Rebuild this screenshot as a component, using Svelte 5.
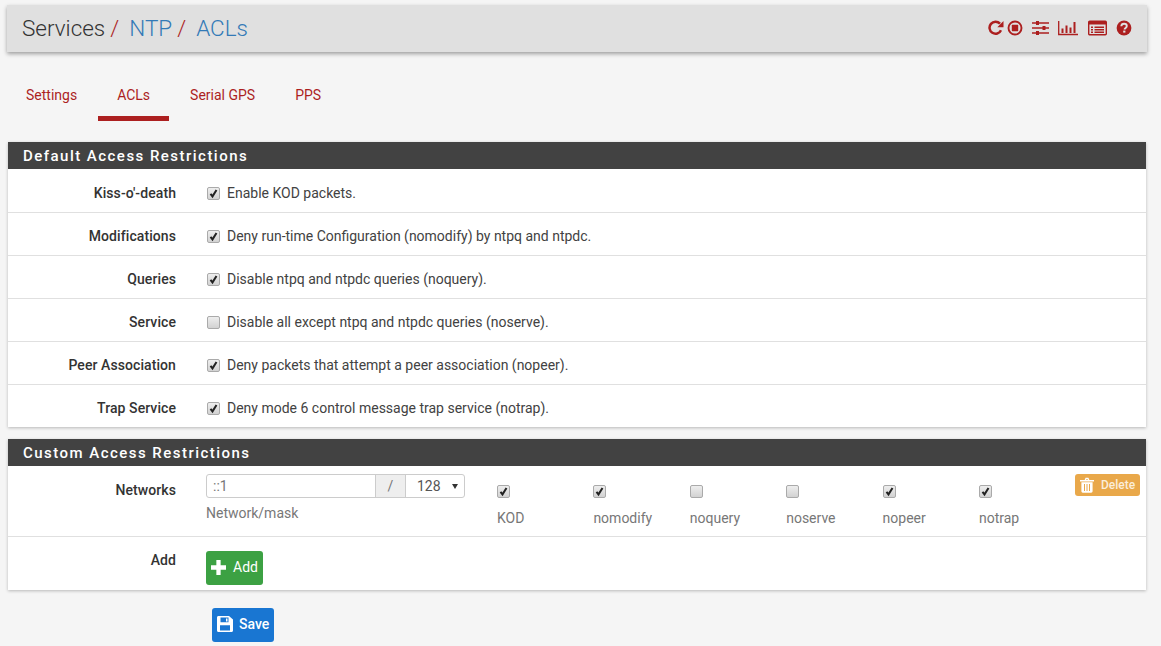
<script>
  const tabs = ["Settings", "ACLs", "Serial GPS", "PPS"];
  const restrictions = [
    { label: "Kiss-o'-death", text: "Enable KOD packets.", on: true },
    { label: "Modifications", text: "Deny run-time Configuration (nomodify) by ntpq and ntpdc.", on: true },
    { label: "Queries", text: "Disable ntpq and ntpdc queries (noquery).", on: true },
    { label: "Service", text: "Disable all except ntpq and ntpdc queries (noserve).", on: false },
    { label: "Peer Association", text: "Deny packets that attempt a peer association (nopeer).", on: true },
    { label: "Trap Service", text: "Deny mode 6 control message trap service (notrap).", on: true }
  ];
  const flags = [
    { name: "KOD", on: true },
    { name: "nomodify", on: true },
    { name: "noquery", on: false },
    { name: "noserve", on: false },
    { name: "nopeer", on: true },
    { name: "notrap", on: true }
  ];
</script>

{#snippet check(on)}
  <span class="check">
    {#if on}
      <svg viewBox="0 0 13 13" width="13" height="13"><path d="M3.5 6.8l2 2.6L9.500 3" fill="none" stroke="#222" stroke-width="2" /></svg>
    {/if}
  </span>
{/snippet}

<div class="page">
  <header class="crumbs">
    <h1>Services<i>/</i><a href="#ntp">NTP</a><i>/</i><a href="#acls">ACLs</a></h1>
    <div class="shortcuts">
      <svg viewBox="0 0 16 16" width="16" height="16"><path d="M13 10.200A6 6 0 1 1 12 3.700" fill="none" stroke="#ac1f1f" stroke-width="2.500" /><path d="M15.500 1v6.200H9.300z" fill="#ac1f1f" /></svg>
      <svg class="stop" viewBox="0 0 16 16" width="16" height="16"><circle cx="8" cy="8" r="6.500" fill="none" stroke="#ac1f1f" stroke-width="1.900" /><rect x="4.800" y="4.800" width="6.400" height="6.400" rx=".6" fill="#ac1f1f" /></svg>
      <svg class="sliders" viewBox="0 0 17 16" width="17" height="16"><path d="M0 3h17M0 8h17M0 13h17" stroke="#ac1f1f" stroke-width="1.300" /><path d="M4 1h3v4H4zM10.500 6h3v4h-3zM4 11h3v4H4z" fill="#ac1f1f" /></svg>
      <svg class="chart" viewBox="0 0 20 16" width="20" height="16"><path d="M.7 1v13.500H20" fill="none" stroke="#ac1f1f" stroke-width="1.300" /><path d="M3.500 8.500h2V13h-2zM7.500 5.500h2V13h-2zM11.500 7.500h2V13h-2zM15.500 2h2v11h-2z" fill="#ac1f1f" /></svg>
      <svg class="list" viewBox="0 0 19 16" width="19" height="16"><rect x=".7" y="1.200" width="17.600" height="13.600" rx="1" fill="none" stroke="#ac1f1f" stroke-width="1.400" /><path d="M1 2h17v2.500H1zM3 6.500h2v1.400H3zM6.500 6.500H16v1.400H6.500zM3 9h2v1.400H3zM6.500 9H16v1.400H6.500zM3 11.500h2v1.400H3zM6.500 11.500H16v1.400H6.500z" fill="#ac1f1f" /></svg>
      <svg class="help" viewBox="0 0 16 16" width="16" height="16"><circle cx="8" cy="8" r="7.400" fill="#ac1f1f" /><path d="M5.300 6.300C5.400 4.600 6.600 3.800 8 3.800c1.500 0 2.800.9 2.800 2.300 0 2-2.200 1.900-2.200 3.500" fill="none" stroke="#e0e0e0" stroke-width="1.900" /><rect x="7.200" y="10.600" width="2.200" height="2" fill="#e0e0e0" /></svg>
    </div>
  </header>

  <nav class="tabs">
    {#each tabs as tab}
      <a href="#tab" class:active={tab === "ACLs"}>{tab}</a>
    {/each}
  </nav>

  <section class="panel">
    <h2>Default Access Restrictions</h2>
    {#each restrictions as r}
      <div class="row">
        <span class="label">{r.label}</span>
        <div class="field">
          {@render check(r.on)}
          <span>{r.text}</span>
        </div>
      </div>
    {/each}
  </section>

  <section class="panel custom">
    <h2>Custom Access Restrictions</h2>
    <div class="row networks">
      <span class="label">Networks</span>
      <div class="net">
        <div class="group">
          <span class="addr">::1</span>
          <span class="slash">/</span>
          <span class="mask">128<b></b></span>
        </div>
        <span class="hint">Network/mask</span>
      </div>
      <div class="flags">
        {#each flags as f}
          <div class="flag">
            {@render check(f.on)}
            <span class="hint">{f.name}</span>
          </div>
        {/each}
      </div>
      <button class="btn delete">
        <svg viewBox="0 0 14 16" width="14" height="16"><path d="M0 3h14v1.600H0zM4.600 3l1-2.300h2.800l1 2.300h-1.500l-.5-1H6.600l-.5 1z" fill="#fff" /><path d="M1.400 5.200h11.200v8.900c0 1-.6 1.600-1.400 1.600H2.800c-.8 0-1.400-.6-1.400-1.600zM4 7v7h1V7zM6.500 7v7h1V7zM9 7v7h1V7z" fill="#fff" fill-rule="evenodd" /></svg>
        Delete
      </button>
    </div>
    <div class="row add">
      <span class="label">Add</span>
      <button class="btn green">
        <svg viewBox="0 0 14 14" width="15" height="15"><path d="M5 0h4v5h5v4H9v5H5V9H0V5h5z" fill="#fff" /></svg>
        Add
      </button>
    </div>
  </section>

  <button class="btn blue">
    <svg viewBox="0 0 16 16" width="16" height="16"><path fill-rule="evenodd" d="M1.500 0H12l4 3.500v11c0 .9-.6 1.500-1.500 1.500h-13C.6 16 0 15.400 0 14.500v-13C0 .6.600 0 1.500 0zM3.500 1.600v4.600h8V1.600zM3 9.300v5.100h10V9.300zM9 2.400h1.500v3H9z" fill="#fff" /></svg>
    Save
  </button>
</div>

<style>
  :global(body) {
    background: #f5f5f5;
    font-family: Roboto, "Liberation Sans", sans-serif;
    font-size: 14px;
    color: #333;
  }
  .page {
    height: 646px;
    overflow: hidden;
    padding: 5px 15px 0 8px;
    box-sizing: border-box;
  }
  .crumbs {
    display: flex;
    align-items: center;
    justify-content: space-between;
    height: 47px;
    margin-left: -1px;
    margin-right: -1px;
    padding: 0 15px 2px;
    box-sizing: border-box;
    background: #e0e0e0;
    box-shadow: 0 2px 4px rgba(0, 0, 0, .35);
  }
  h1 {
    margin: 0;
    font-size: 22.500px;
    font-weight: 300;
    color: #333;
  }
  h1 i {
    font-style: normal;
    color: #ac1f1f;
    margin: 0 10px 0 5px;
  }
  h1 a {
    color: #337ab7;
    text-decoration: none;
  }
  .shortcuts {
    display: flex;
    align-items: center;
  }
  .stop {
    margin-left: 3px;
  }
  .sliders,
  .chart,
  .help {
    margin-left: 9px;
  }
  .list {
    margin-left: 10px;
  }
  .tabs {
    display: flex;
    margin: 21px 0 0 -1px;
    height: 48px;
  }
  .tabs a {
    display: block;
    padding: 14px 19px 0;
    height: 48px;
    box-sizing: border-box;
    color: #ac1f1f;
    text-decoration: none;
    font-size: 14px;
    margin-right: 2px;
  }
  .tabs a.active {
    border-bottom: 5px solid #ac1f1f;
  }
  .panel {
    margin-top: 21px;
    background: #fff;
    box-shadow: 0 1px 3px rgba(0, 0, 0, .25);
  }
  .panel.custom {
    margin-top: 12px;
  }
  h2 {
    margin: 0 0 1px;
    height: 27px;
    line-height: 29px;
    padding-left: 15px;
    background: #424242;
    color: #fff;
    font-size: 15px;
    font-weight: 500;
    letter-spacing: 1.470px;
  }
  .row {
    display: flex;
    align-items: center;
    height: 43px;
    padding-top: 4px;
    box-sizing: border-box;
    border-bottom: 1px solid #e0e0e0;
  }
  .row:last-child {
    height: 42px;
    border-bottom: 0;
  }
  .label {
    width: 168px;
    flex: none;
    text-align: right;
    font-weight: 500;
    letter-spacing: .08px;
    color: #333;
    margin-right: 31px;
  }
  .field {
    display: flex;
    align-items: center;
    gap: 7px;
    color: #424242;
  }
  .check {
    display: block;
    width: 11px;
    height: 11px;
    flex: none;
    position: relative;
    border: 1px solid #aaa;
    border-radius: 2px;
    background: linear-gradient(#eee, #d2d2d2);
  }
  .check svg {
    position: absolute;
    left: -1px;
    top: -1px;
  }
  .networks {
    height: 70px;
    padding-top: 0;
    align-items: flex-start;
  }
  .networks .label {
    margin-top: 15px;
    margin-right: 30px;
  }
  .net {
    width: 259px;
    flex: none;
    margin-top: 7px;
  }
  .group {
    display: flex;
    height: 24px;
    box-sizing: border-box;
    border: 1px solid #ccc;
    border-radius: 3px;
    color: #777;
    line-height: 22px;
  }
  .addr {
    flex: 1;
    padding-left: 6px;
    font-size: 14px;
  }
  .slash {
    width: 31px;
    box-sizing: border-box;
    text-align: center;
    background: #eee;
    border-left: 1px solid #ccc;
    border-right: 1px solid #ccc;
  }
  .mask {
    width: 58px;
    box-sizing: border-box;
    padding-left: 11px;
    position: relative;
    color: #555;
  }
  .mask b {
    position: absolute;
    right: 6px;
    top: 9px;
    border: 3.500px solid transparent;
    border-top: 5px solid #333;
    border-bottom: 0;
  }
  .hint {
    display: block;
    font-size: 14px;
    color: #777;
  }
  .net .hint {
    margin-top: 7px;
  }
  .flags {
    display: flex;
    margin-left: 32px;
    margin-top: 18px;
  }
  .flag {
    width: 96.400px;
  }
  .flag .hint {
    margin-top: 12px;
  }
  .btn {
    display: flex;
    align-items: center;
    border: 0;
    border-radius: 3px;
    color: #fff;
    font-family: inherit;
    font-weight: 500;
    cursor: pointer;
  }
  .delete {
    position: absolute;
    left: 1075px;
    top: 474px;
    width: 65px;
    height: 22px;
    padding: 0 0 0 5px;
    gap: 7px;
    background: #e9a84a;
    font-size: 12px;
    color: #fbeeda;
  }
  .row.add {
    height: 53px;
    padding-top: 0;
  }
  .add .label {
    align-self: flex-start;
    margin-top: 15px;
    margin-right: 30px;
  }
  .green {
    align-self: flex-start;
    width: 57px;
    height: 34px;
    margin-top: 14px;
    padding: 0 0 2px 5px;
    gap: 7px;
    background: #3ca143;
    font-size: 14px;
    font-weight: 400;
  }
  .blue {
    margin: 18px 0 0 204px;
    width: 62px;
    height: 34px;
    padding: 0 0 2px 5px;
    gap: 6px;
    background: #1976d2;
    font-size: 14px;
  }
</style>
